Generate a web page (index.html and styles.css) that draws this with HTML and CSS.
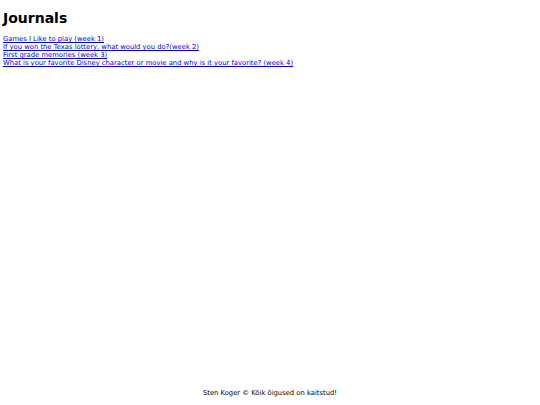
FILE: index.html
```html
<!DOCTYPE html>
<html>
<head>
<meta charset="utf-8">
<link rel="stylesheet" href="styles.css">
</head>
<body>
<div class="page">
  <main class="content">
    <h1 class="title">Journals</h1>
    <ul class="list">
      <li><a href="#">Games I Like to play (week 1)</a></li>
      <li><a href="#">If you won the Texas lottery, what would you do?(week 2)</a></li>
      <li><a href="#">First grade memories (week 3)</a></li>
      <li><a href="#">What is your favorite Disney character or movie and why is it your favorite? (week 4)</a></li>
    </ul>
  </main>
  <footer class="footer">Sten Koger © Kõik õigused on kaitstud!</footer>
</div>
</body>
</html>
```
FILE: styles.css
```css
html, body { margin: 0; padding: 0; }
body { font-family: "DejaVu Sans", Verdana, sans-serif; color: #000; background: #fff; }
.page { display: flex; flex-direction: column; min-height: 405px; padding: 0 3px; box-sizing: border-box; }
.content { flex: 1; }
.title { font-size: 14px; font-weight: bold; margin: 10.7px 0 0; line-height: 14px; }
.list { list-style: none; margin: 10.3px 0 0; padding: 0; font-size: 6.8px; line-height: normal; }
.list a { color: #00e; }
.footer { font-size: 6.8px; text-align: center; padding-bottom: 8.4px; line-height: normal; }
```
